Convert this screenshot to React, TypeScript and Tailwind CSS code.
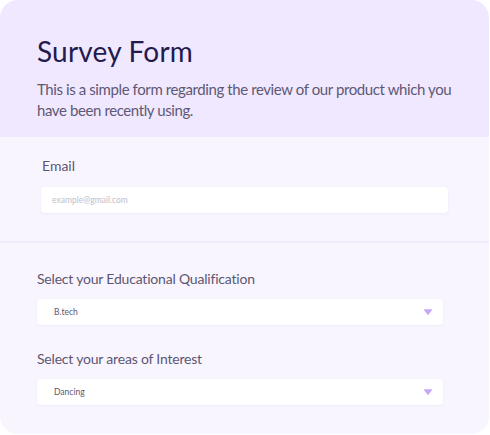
import React from 'react';

function Chevron() {
  return (
    <svg width="10" height="8" viewBox="0 0 10 8" className="shrink-0">
      <path d="M1.2 1.2 H8.8 Q9.6 1.2 9.1 2 L5.6 6.6 Q5 7.3 4.4 6.6 L0.9 2 Q0.4 1.2 1.2 1.2 Z" fill="#c6a8fb" />
    </svg>
  );
}

function SelectField({ label, value }: { label: string; value: string }) {
  return (
    <div className="flex flex-col">
      <label className="text-[14px] leading-[20px] text-[#5d5672] tracking-[-0.2px]">{label}</label>
      <div className="mt-[10px] mr-[46px] h-[26px] bg-white rounded-[4px] shadow-[0_1px_3px_rgba(120,100,170,0.08)] flex items-center pl-[17px] pr-[10px]">
        <span className="flex-1 text-[8.5px] text-[#5d5672]">{value}</span>
        <Chevron />
      </div>
    </div>
  );
}

export default function App() {
  return (
    <div className="w-[490px] h-[435px] bg-white" style={{ fontFamily: "'Lato', 'Noto Sans', sans-serif" }}>
      <div className="w-[489px] h-[434px] rounded-[18px] overflow-hidden bg-[#f8f5ff] flex flex-col">
        {/* Header */}
        <div className="h-[137px] bg-[#f0e8ff] px-[37px] pt-[33px]">
          <h1 className="text-[28px] leading-[36px] text-[#231a4e] tracking-[0.2px]">Survey Form</h1>
          <p className="mt-[10px] text-[15px] leading-[21px] text-[#5e5874] tracking-[-0.4px]">
            This is a simple form regarding the review of our product which you have been recently using.
          </p>
        </div>

        {/* Email */}
        <div className="h-[106px] pl-[41px] pr-[41px] pt-[19px] border-b-2 border-[#efeaf9]">
          <label className="block text-[14px] leading-[20px] text-[#5d5672] pl-[1px]">Email</label>
          <div className="mt-[11px] h-[26px] bg-white rounded-[4px] shadow-[0_1px_3px_rgba(120,100,170,0.08)] flex items-center px-[11px]">
            <span className="text-[8.5px] text-[#c1bdcc]">example@gmail.com</span>
          </div>
        </div>

        {/* Selects */}
        <div className="flex flex-col gap-[24px] pl-[37px] pt-[26px]">
          <SelectField label="Select your Educational Qualification" value="B.tech" />
          <SelectField label="Select your areas of Interest" value="Dancing" />
        </div>
      </div>
    </div>
  );
}
